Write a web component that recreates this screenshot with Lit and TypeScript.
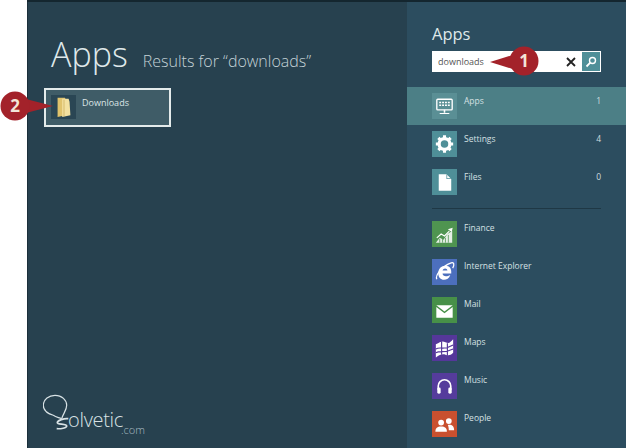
import { LitElement, html, css, svg } from "lit";
import { customElement } from "lit/decorators.js";

const icons: Record<string, unknown> = {
  apps: svg`<rect x="5" y="6" width="16" height="11" rx="1" fill="none" stroke="#fff" stroke-width="1.4"/><path d="M7.5 8.500h2v1.600h-2zM10.500 8.500h2v1.600h-2zM13.500 8.500h2v1.600h-2zM16.500 8.500h2v1.600h-2zM7.500 11.500h2v1.600h-2zM10.500 11.500h2v1.600h-2zM13.500 11.500h2v1.600h-2zM16.500 11.500h2v1.600h-2z" fill="#fff"/><path d="M12.200 17h1.600v3h-1.600zM8 20.200h10v1.200H8z" fill="#fff"/>`,
  gear: svg`<circle cx="13" cy="13" r="5.600" fill="none" stroke="#fff" stroke-width="3.400"/><path d="M13 13L13 4M13 13L13 22M13 13L4 13M13 13L22 13M13 13L6.600 6.600M13 13L19.400 19.400M13 13L19.400 6.600M13 13L6.600 19.400" stroke="#fff" stroke-width="3.200" stroke-dasharray="0 6 3 20"/>`,
  file: svg`<path d="M7 5h8l5 5v12H7z" fill="#fff"/><path d="M15 5v5h5z" fill="#4f8f98"/><path d="M15.800 5.800v3.400h3.400z" fill="#fff"/>`,
  finance: svg`<path d="M4 22l4-5 4 2 4-6 5-3v12z" fill="#fff" opacity=".85"/><path d="M5 17l4.500-4 3.500 2 5-5" fill="none" stroke="#fff" stroke-width="1.300"/><path d="M16.500 8l5-1.500-1 4.500z" fill="#fff"/><path d="M8 18v4M11 18v4M14 17v5M17 14v8" stroke="#4f9450" stroke-width=".8"/>`,
  ie: svg`<path d="M5 20.500c-2-4 6-14 15-17 3-1 3.500 2 1.500 5.500" fill="none" stroke="#fff" stroke-width="1.300"/><path d="M6.500 14.500c0-5 3-8 7.500-8s6.500 3 6 8h-9c0 3 4 4 8 1.500-1 3.500-4 5-6.500 5-3.500 0-6-2.500-6-6.500zM11 11.500h5c0-3-4.500-3-5 0z" fill="#fff" fill-rule="evenodd"/>`,
  mail: svg`<path d="M4.500 8h17L13 14.500z" fill="#fff"/><path d="M4.500 10L13 16.500 21.500 10v11h-17z" fill="#fff"/>`,
  maps: svg`<path d="M4 9c5-2 6-4 10-2s5 0 8-3v14c-3 3-5 3-8 2s-6 0-10 3z" fill="#fff"/><path d="M4 14c5-3 8 2 18-4M4 18c5-3 8 1 18-4M10 6v14M16 8v13" stroke="#55379a" stroke-width="1.200" fill="none"/>`,
  music: svg`<path d="M6.500 17v-4a6.500 6.500 0 0 1 13 0v4" fill="none" stroke="#fff" stroke-width="1.700"/><rect x="5.500" y="14.500" width="3.500" height="6.500" rx="1.500" fill="#fff"/><rect x="17" y="14.500" width="3.500" height="6.500" rx="1.500" fill="#fff"/>`,
  people: svg`<circle cx="9.500" cy="11.500" r="3" fill="#fff"/><path d="M3.500 21c0-4 2-5.500 6-5.500s6 1.500 6 5.500z" fill="#fff"/><circle cx="17.500" cy="10" r="3" fill="#fff"/><path d="M16.500 14c4-.5 6.500 1 6.500 5.500h-5.500c0-2.500-.5-4-1-5.500z" fill="#fff"/>`,
};

const cats = [
  { label: "Apps", count: "1", icon: "apps", bg: "#5a8f95", active: true },
  { label: "Settings", count: "4", icon: "gear", bg: "#4f8f98" },
  { label: "Files", count: "0", icon: "file", bg: "#4f8f98" },
];
const apps = [
  { label: "Finance", icon: "finance", bg: "#4f9450" },
  { label: "Internet Explorer", icon: "ie", bg: "#4c6fbd" },
  { label: "Mail", icon: "mail", bg: "#479048" },
  { label: "Maps", icon: "maps", bg: "#55379a" },
  { label: "Music", icon: "music", bg: "#553c9c" },
  { label: "People", icon: "people", bg: "#c9502f" },
];

@customElement("app-root")
export class AppRoot extends LitElement {
  static styles = css`
    :host { display: block; width: 626px; height: 448px; background: #fff; position: relative; overflow: hidden;
      font-family: "Open Sans", "Liberation Sans", sans-serif; color: #d5e0e3; }
    .screen { display: flex; height: 446px; margin: 2px 0 0 27px; box-shadow: 0 -2px 0 #14262f; }
    .main { width: 380px; background: #27414f; border-left: 1px solid #1b2f3a; box-sizing: border-box; padding: 27px 0 0 23px; display: flex; flex-direction: column; position: relative; }
    .head { display: flex; align-items: baseline; gap: 15px; height: 59px; }
    .title { font-size: 34px; font-weight: 300; line-height: 50px; color: #dfe8ea; }
    .sub { font-size: 16px; font-weight: 300; color: #c3d1d6; }
    .tile { width: 127px; height: 39px; box-sizing: border-box; border: 2px solid #e4ebeb; background: #3f5c67; padding: 5px; display: flex; gap: 6px; margin-left: -7px; }
    .thumb { width: 25px; height: 24px; background: #2a4654; display: flex; align-items: center; justify-content: center; }
    .tile span { font-size: 9px; line-height: 11px; color: #dbe5e6; margin-top: 2px; }
    .side { flex: 1; background: #2c4d5f; padding-top: 15px; box-sizing: border-box; }
    .side h2 { margin: 0 0 0 25px; font-size: 16.500px; font-weight: 400; line-height: 34px; color: #dfe8ea; }
    .search { margin: 0 0 0 25px; width: 169px; height: 21px; box-sizing: border-box; background: #fff; display: flex; align-items: center; padding: 0 1px 0 6px; }
    .search .q { flex: 1; font-size: 9px; color: #555; }
    .x { width: 16px; height: 16px; }
    .go { width: 18px; height: 19px; background: #4f8f98; display: flex; align-items: center; justify-content: center; margin-left: 3px; }
    .rows { margin-top: 15px; }
    .row { height: 38px; display: flex; padding: 6px 25px 0 25px; box-sizing: border-box; }
    .row.active { background: #4c7f86; }
    .ico { width: 25px; height: 26px; flex: none; }
    .ico svg { display: block; }
    .lbl { flex: 1; font-size: 8.500px; line-height: 11px; margin: 2px 0 0 7px; color: #d5e0e3; }
    .cnt { font-size: 8.500px; line-height: 11px; margin-top: 2px; color: #cfdcdf; }
    hr { border: 0; height: 1px; background: #1f3845; margin: 7px 25px 12px; }
    .list .row { padding-top: 0; }
    .list .lbl { margin-top: 1px; }
    .logo { position: absolute; left: 15px; top: 391px; width: 110px; height: 50px; }
    .logo-svg { position: absolute; left: 0; top: 0; }
    .logo-text { position: absolute; left: 25px; top: 14px; font-size: 20px; color: #d8e2e5; font-weight: 300; line-height: 26px; letter-spacing: -.3px; }
    .logo-com { position: absolute; left: 78px; top: 30px; font-size: 11px; color: #a9bcc2; font-weight: 300; line-height: 14px; }
    .callout { position: absolute; display: block; }
    .num { position: absolute; font: 700 17px/30px "Open Sans", sans-serif; color: #f3e6d8; text-align: center; width: 30px; height: 30px; }
    .n1 { left: 509px; top: 46px; }
    .n2 { left: 0; top: 91px; }
    .c1 { left: 490px; top: 46px; }
    .c2 { left: 0; top: 90px; }
  `;

  private icon(name: string, bg: string) {
    return html`<div class="ico" style="background:${bg}"><svg width="25" height="26" viewBox="0 0 26 26">${icons[name]}</svg></div>`;
  }

  render() {
    return html`
      <div class="screen">
        <div class="main">
          <div class="head"><span class="title">Apps</span><span class="sub">Results for “downloads”</span></div>
          <div class="tile">
            <div class="thumb">
              <svg width="16" height="22" viewBox="0 0 16 24">
                <path d="M1 2h8l1 2v17l-9 2z" fill="#e0c36c"/>
                <path d="M6 3h7l1 3 1 15-9 2z" fill="#f3e1a0"/>
                <path d="M8 4v18" stroke="#c9ab58" stroke-width=".8"/>
              </svg>
            </div>
            <span>Downloads</span>
          </div>
          <div class="logo">
            <svg class="logo-svg" width="36" height="44" viewBox="0 0 36 44" fill="none" stroke="#d8e2e5" stroke-width="1.200">
              <path d="M10.300 22.300C3 20 .3 16 .3 12.300 .5 6 6 2.300 12 2.300c7 0 11.700 5 11.700 10 0 5-3.500 8-5 13.400M10.300 22.300c3 2 5 2 8.400 3.400"/>
              <path d="M25.300 25.700c-4-.5-11 1.500-11 4 0 2 9.400 .8 9.400 3.300 0 2-6 3-10 2.700" stroke-width="1.700"/>
            </svg>
            <span class="logo-text">olvetic</span><span class="logo-com">.com</span>
          </div>
        </div>
        <div class="side">
          <h2>Apps</h2>
          <div class="search">
            <span class="q">downloads</span>
            <svg class="x" viewBox="0 0 16 16"><path d="M4 4l8 8M12 4l-8 8" stroke="#222" stroke-width="1.800"/></svg>
            <div class="go"><svg width="14" height="14" viewBox="0 0 14 14" fill="none" stroke="#fff" stroke-width="1.400"><circle cx="8.500" cy="5.500" r="3"/><path d="M6.300 7.700L2.500 11.500" stroke-width="1.800"/></svg></div>
          </div>
          <div class="rows">
            ${cats.map(c => html`<div class="row ${c.active ? "active" : ""}">${this.icon(c.icon, c.bg)}<span class="lbl">${c.label}</span><span class="cnt">${c.count}</span></div>`)}
          </div>
          <hr />
          <div class="list">
            ${apps.map(a => html`<div class="row">${this.icon(a.icon, a.bg)}<span class="lbl">${a.label}</span></div>`)}
          </div>
        </div>
      </div>
      <svg class="callout c1" width="50" height="32" viewBox="0 0 50 32">
        <path d="M0 16L26 8V24z" fill="#a3222a"/><circle cx="34" cy="15" r="14.500" fill="#a3222a"/>
      </svg>
      <span class="num n1">1</span>
      <svg class="callout c2" width="54" height="32" viewBox="0 0 54 32">
        <path d="M53 16L22 8V24z" fill="#a3222a"/><circle cx="15" cy="16" r="14.500" fill="#a3222a"/>
      </svg>
      <span class="num n2">2</span>
    `;
  }
}
